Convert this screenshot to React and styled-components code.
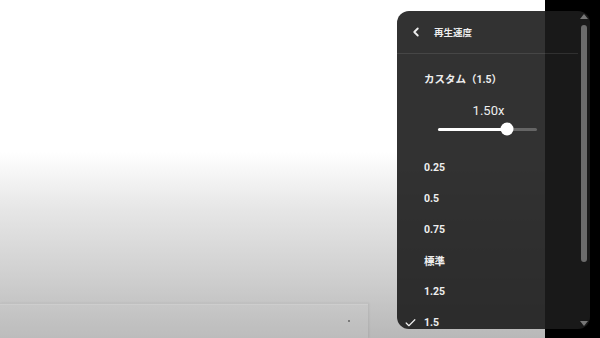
import React from 'react'
import styled, { createGlobalStyle } from 'styled-components'
import { ChevronLeft, Check } from 'lucide-react'

const GlobalStyle = createGlobalStyle`
  html, body {
    margin: 0;
    padding: 0;
    width: 600px;
    height: 338px;
    overflow: hidden;
    background: #000;
    font-family: Roboto, "Noto Sans CJK JP", "Noto Sans", sans-serif;
  }
`

const Page = styled.div`
  position: relative;
  display: flex;
  width: 600px;
  height: 338px;
`

const Stage = styled.div`
  flex: 1;
  display: flex;
  flex-direction: column;
  justify-content: flex-end;
  background: linear-gradient(to bottom, #ffffff 0%, #ffffff 45%, #e6e6e6 62%, #cfcfcf 82%, #b8b8b8 100%);
`

const BottomBar = styled.div`
  position: relative;
  width: 368px;
  height: 35px;
  background: rgba(255, 255, 255, 0.06);
  border-top: 1px solid rgba(0, 0, 0, 0.04);
  box-shadow: 1px 0 2px rgba(0, 0, 0, 0.08), inset 0 1px 0 rgba(255, 255, 255, 0.12);
  display: flex;
  justify-content: flex-end;
  align-items: center;
  padding-right: 18px;
  box-sizing: border-box;
`

const Dot = styled.span`
  width: 2px;
  height: 2px;
  background: #7a7a7a;
`

const BlackColumn = styled.div`
  width: 55px;
  background: #000;
`

const Menu = styled.div`
  position: absolute;
  top: 11px;
  left: 397px;
  width: 193px;
  height: 318px;
  border-radius: 12px;
  background: rgba(28, 28, 28, 0.9);
  overflow: hidden;
  color: #eee;
`

const Content = styled.div`
  margin-right: 12px;
`

const Header = styled.div`
  height: 42px;
  display: flex;
  align-items: center;
  border-bottom: 1px solid rgba(255, 255, 255, 0.1);
  padding-left: 12px;
  gap: 11px;
`

const Title = styled.span`
  font-size: 9.5px;
  font-weight: 700;
  color: #eee;
`

const CustomSection = styled.div`
  padding-top: 10px;
  display: flex;
  flex-direction: column;
`

const CustomLabel = styled.div`
  height: 31px;
  line-height: 31px;
  padding-left: 27px;
  font-size: 10.5px;
  font-weight: 700;
`

const SpeedValue = styled.div`
  margin-top: 6px;
  height: 20px;
  line-height: 20px;
  text-align: center;
  padding-left: 2px;
  font-size: 13px;
  font-weight: 400;
  color: #eee;
`

const SliderRow = styled.div`
  height: 16px;
  display: flex;
  align-items: center;
  padding-left: 41px;
`

const Track = styled.div`
  position: relative;
  width: 99px;
  height: 3px;
  border-radius: 2px;
  background: rgba(255, 255, 255, 0.25);
`

const Fill = styled.div`
  height: 100%;
  background: #fff;
  border-radius: 2px;
`

const Thumb = styled.div`
  position: absolute;
  top: 50%;
  width: 13px;
  height: 13px;
  border-radius: 50%;
  background: #fff;
  transform: translate(-50%, -50%);
`

const List = styled.div`
  margin-top: 15px;
`

const Item = styled.div`
  position: relative;
  height: 31px;
  display: flex;
  align-items: center;
  padding-left: 27px;
  font-size: 10.5px;
  font-weight: 700;
  color: #eee;
`

const CheckMark = styled(Check)`
  position: absolute;
  left: 7px;
  top: 50%;
  transform: translateY(-50%);
`

const Scrollbar = styled.div`
  position: absolute;
  top: 0;
  right: 0;
  width: 12px;
  height: 100%;
  display: flex;
  flex-direction: column;
  align-items: center;
`

const Arrow = styled.div`
  width: 0;
  height: 0;
  border-left: 4px solid transparent;
  border-right: 4px solid transparent;
  ${p => p.up
    ? 'border-bottom: 5px solid #777; margin-top: 3px;'
    : 'border-top: 5px solid #777; position: absolute; bottom: 3px;'}
`

const ScrollThumb = styled.div`
  margin-top: 6px;
  width: 6px;
  height: 237px;
  border-radius: 3px;
  background: #6b6b6b;
`

const speeds = ['0.25', '0.5', '0.75', '標準', '1.25', '1.5']
const current = 1.5
const min = 0.25
const max = 2
const trackWidth = 99

export default function App() {
  const ratio = (current - min) / (max - min)
  const thumbX = 3 + ratio * (trackWidth - 6)
  return (
    <>
      <GlobalStyle />
      <Page>
        <Stage>
          <BottomBar>
            <Dot />
          </BottomBar>
        </Stage>
        <BlackColumn />
        <Menu>
          <Content>
            <Header>
              <ChevronLeft size={14} strokeWidth={3.2} color="#eee" />
              <Title>再生速度</Title>
            </Header>
            <CustomSection>
              <CustomLabel>カスタム（1.5）</CustomLabel>
              <SpeedValue>1.50x</SpeedValue>
              <SliderRow>
                <Track>
                  <Fill style={{ width: `${thumbX}px` }} />
                  <Thumb style={{ left: `${thumbX}px` }} />
                </Track>
              </SliderRow>
            </CustomSection>
            <List>
              {speeds.map(s => (
                <Item key={s}>
                  {s === '1.5' && <CheckMark size={13} strokeWidth={2.2} color="#eee" />}
                  {s}
                </Item>
              ))}
            </List>
          </Content>
          <Scrollbar>
            <Arrow up />
            <ScrollThumb />
            <Arrow />
          </Scrollbar>
        </Menu>
      </Page>
    </>
  )
}
